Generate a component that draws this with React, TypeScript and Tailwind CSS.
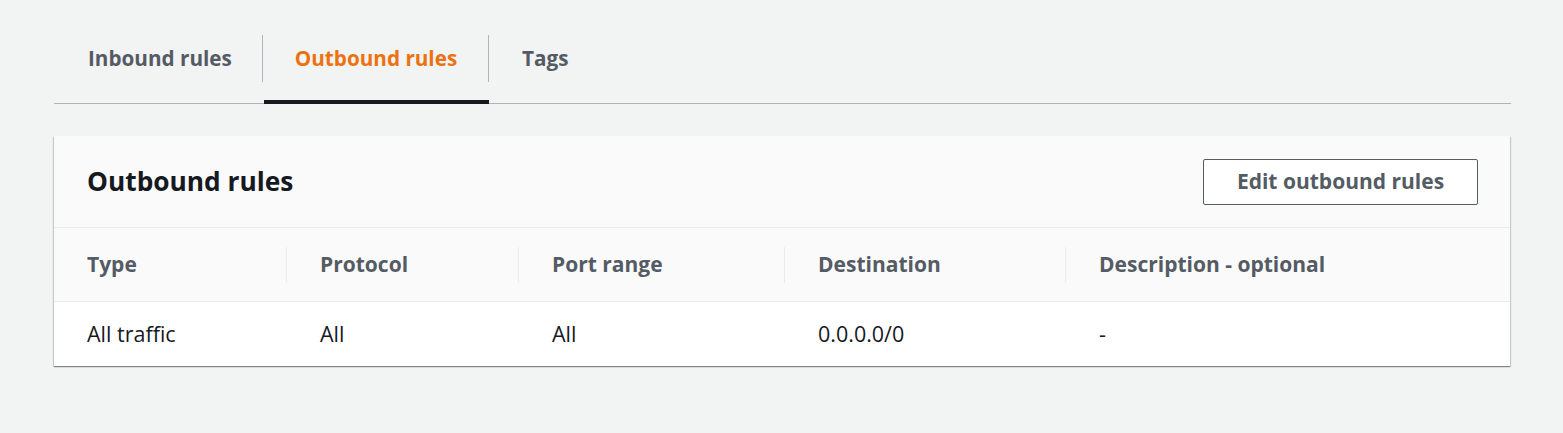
import React from "react";

const font = { fontFamily: '"Open Sans", "Noto Sans", sans-serif' };

export default function App() {
  const cols = [
    { label: "Type", w: "w-[233px]", value: "All traffic" },
    { label: "Protocol", w: "w-[232px]", value: "All" },
    { label: "Port range", w: "w-[266px]", value: "All" },
    { label: "Destination", w: "w-[281px]", value: "0.0.0.0/0" },
    { label: "Description - optional", w: "flex-1", value: "-" },
  ];
  return (
    <div className="min-h-[433px] w-full bg-[#f2f3f3] pt-[35px] px-[54px]" style={font}>
      <div className="w-[1457px]">
        {/* Tabs */}
        <div className="flex border-b border-[#aab7b8] h-[69px]">
          <div className="w-[209px] flex items-start">
            <div className="w-full h-[47px] flex items-center pl-[34px] text-[20.7px] font-bold text-[#545b64] border-r border-[#aab7b8]">
              Inbound rules
            </div>
          </div>
          <div className="ml-[1px] w-[225px] flex flex-col justify-between border-b-[4px] border-[#16191f] -mb-px">
            <div className="h-[47px] flex items-center justify-center text-[20.7px] font-bold text-[#ec7211] border-r border-[#aab7b8]">
              Outbound rules
            </div>
          </div>
          <div className="flex items-start">
            <div className="h-[47px] flex items-center pl-[33px] text-[20.7px] font-bold text-[#545b64]">
              Tags
            </div>
          </div>
        </div>

        {/* Card */}
        <div className="mt-[32px] w-[1456px] bg-white shadow-[0_1px_1px_0_rgba(0,28,36,0.3),1px_1px_1px_0_rgba(0,28,36,0.15),-1px_1px_1px_0_rgba(0,28,36,0.15)]">
          <div className="bg-[#fafafa] h-[92px] flex items-center justify-between pl-[33px] pr-[32px] border-b border-[#eaeded]">
            <h2 className="text-[26.3px] font-bold text-[#16191f]">Outbound rules</h2>
            <button className="h-[46px] w-[275px] border border-[#545b64] rounded-[2px] bg-white text-[21px] font-bold text-[#545b64]">
              Edit outbound rules
            </button>
          </div>
          <div className="bg-[#fafafa] h-[74px] flex items-center border-b border-[#eaeded]">
            {cols.map((c, i) => (
              <div
                key={c.label}
                className={`${c.w} h-[36px] flex items-center pl-[33px] text-[21px] font-bold text-[#545b64] ${i < cols.length - 1 ? "border-r border-[#eaeded]" : ""}`}
              >
                {c.label}
              </div>
            ))}
          </div>
          <div className="h-[64px] flex items-center">
            {cols.map((c) => (
              <div key={c.label} className={`${c.w} pl-[33px] text-[21.5px] text-[#16191f]`}>
                {c.value}
              </div>
            ))}
          </div>
        </div>
      </div>
    </div>
  );
}
